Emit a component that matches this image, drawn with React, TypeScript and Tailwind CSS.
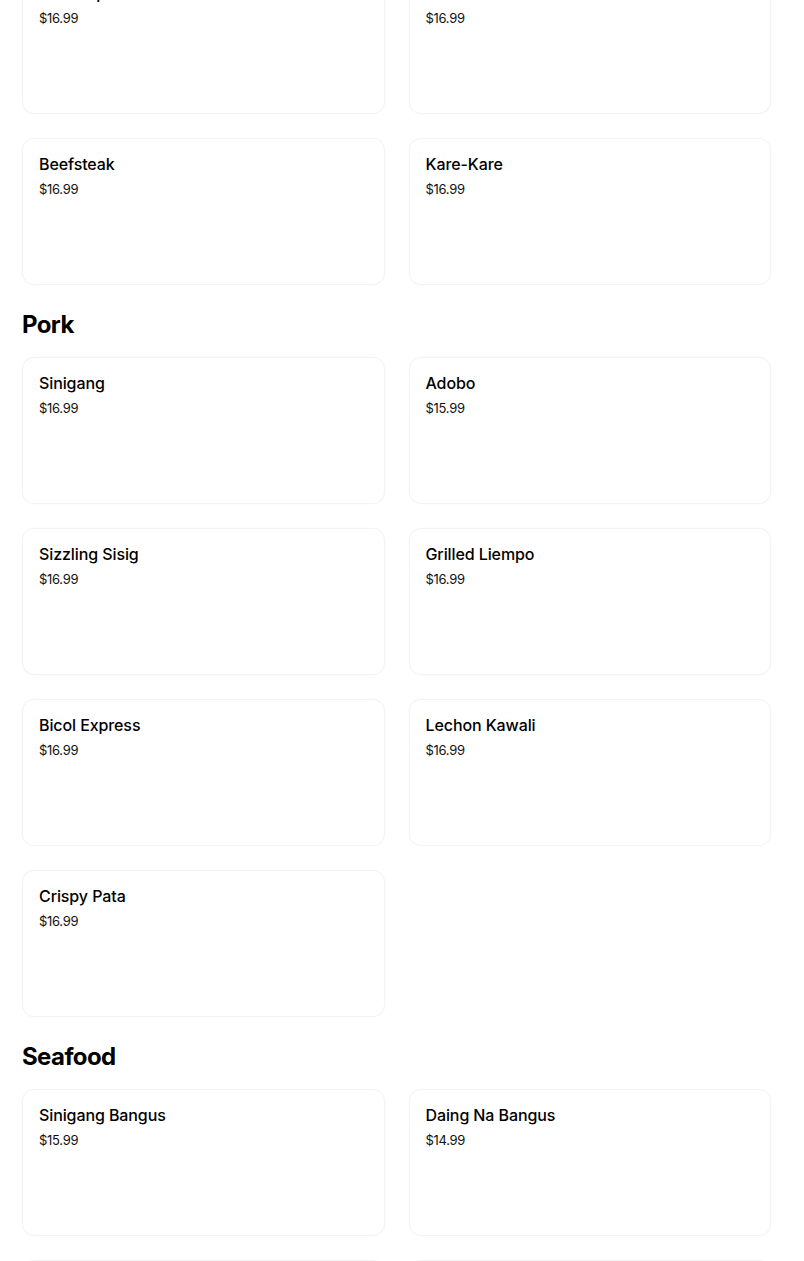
import React from "react";

type Item = { name: string; price: string };

const sections: { title?: string; items: Item[] }[] = [
  {
    items: [
      { name: "Beef Tapa", price: "$16.99" },
      { name: "Bulalo", price: "$16.99" },
      { name: "Beefsteak", price: "$16.99" },
      { name: "Kare-Kare", price: "$16.99" },
    ],
  },
  {
    title: "Pork",
    items: [
      { name: "Sinigang", price: "$16.99" },
      { name: "Adobo", price: "$15.99" },
      { name: "Sizzling Sisig", price: "$16.99" },
      { name: "Grilled Liempo", price: "$16.99" },
      { name: "Bicol Express", price: "$16.99" },
      { name: "Lechon Kawali", price: "$16.99" },
      { name: "Crispy Pata", price: "$16.99" },
    ],
  },
  {
    title: "Seafood",
    items: [
      { name: "Sinigang Bangus", price: "$15.99" },
      { name: "Daing Na Bangus", price: "$14.99" },
      { name: "Ginataang Hipon", price: "$16.99" },
      { name: "Inihaw Na Pusit", price: "$16.99" },
    ],
  },
];

function Card({ item }: { item: Item }) {
  return (
    <div className="h-[147px] rounded-xl border border-[#f3f3f3] bg-white px-4 pt-[15px] shadow-[0_0_2px_rgba(0,0,0,0.03)]">
      <div className="text-[16px] leading-[20px] font-medium text-black tracking-[-0.1px]">
        {item.name}
      </div>
      <div className="mt-[5px] text-[13px] leading-[20px] text-[#111] tracking-[-0.3px]">
        {item.price}
      </div>
    </div>
  );
}

export default function App() {
  return (
    <div
      className="h-[1261px] overflow-hidden bg-white"
      style={{ fontFamily: "Inter, 'Noto Sans', sans-serif" }}
    >
      <div className="-mt-[33px] pl-[22px] pr-[33px]">
        {sections.map((s, i) => (
          <div key={i}>
            {s.title && (
              <h2 className="mt-[24px] mb-[16px] text-[24px] leading-[32px] font-bold text-black tracking-[-0.6px]">
                {s.title}
              </h2>
            )}
            <div className="grid grid-cols-2 gap-x-6 gap-y-6">
              {s.items.map((it, j) => (
                <Card key={j} item={it} />
              ))}
            </div>
          </div>
        ))}
      </div>
    </div>
  );
}
